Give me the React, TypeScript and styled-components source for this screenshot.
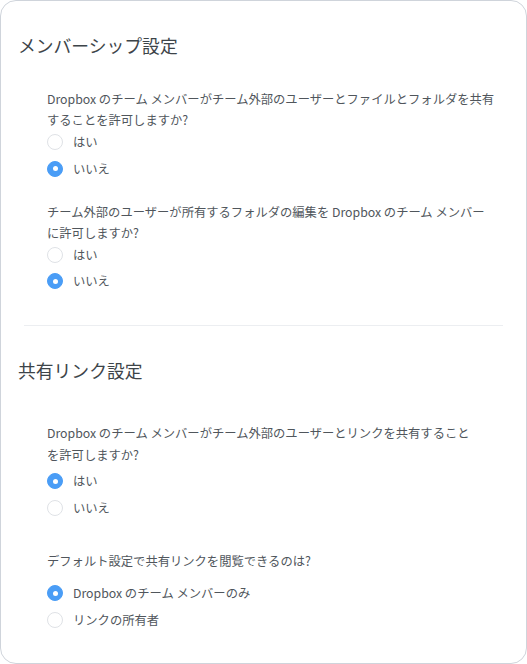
import React from "react";
import styled, { createGlobalStyle } from "styled-components";

const Global = createGlobalStyle`
  html, body { margin: 0; padding: 0; background: #ffffff; }
  body { font-family: "Noto Sans CJK JP", "Noto Sans", sans-serif; }
  * { box-sizing: border-box; }
`;

const Card = styled.div`
  width: 527px;
  height: 664px;
  border: 1px solid #cfd4db;
  border-radius: 16px;
  background: #fff;
  display: flex;
  flex-direction: column;
  overflow: hidden;
`;

const Section = styled.section<{ $pt: number }>`
  padding-top: ${(p) => p.$pt}px;
  display: flex;
  flex-direction: column;
`;

const Title = styled.h2`
  margin: 0;
  padding-left: 17px;
  font-size: 17.8px;
  line-height: 24px;
  font-weight: 400;
  color: #3d4449;
`;

const Divider = styled.hr`
  margin: 0 23px;
  border: none;
  border-top: 1px solid #eceef1;
  height: 0;
`;

const Group = styled.div<{ $mt: number }>`
  margin-top: ${(p) => p.$mt}px;
  padding-left: 46px;
  display: flex;
  flex-direction: column;
`;

const Question = styled.p<{ $mb: number }>`
  margin: 0 0 ${(p) => p.$mb}px;
  font-size: 12.3px;
  line-height: 21.5px;
  color: #50565c;
  white-space: nowrap;
`;

const Options = styled.div<{ $gap: number }>`
  display: flex;
  flex-direction: column;
  gap: ${(p) => p.$gap}px;
`;

const Option = styled.label`
  display: flex;
  align-items: center;
  gap: 10px;
  height: 20px;
  font-size: 12.3px;
  color: #50565c;
  cursor: pointer;
`;

const Radio = styled.span<{ $checked: boolean }>`
  width: 16px;
  height: 16px;
  border-radius: 50%;
  flex: none;
  display: flex;
  align-items: center;
  justify-content: center;
  background: ${(p) => (p.$checked ? "#4a9df6" : "#ffffff")};
  border: 1px solid ${(p) => (p.$checked ? "#4a9df6" : "#dfe2e6")};
  &::after {
    content: "";
    width: 5px;
    height: 5px;
    border-radius: 50%;
    background: #fff;
    display: ${(p) => (p.$checked ? "block" : "none")};
  }
`;

type Q = { lines: string[]; options: string[]; checked: number; mt: number; mb: number; gap: number };

const QuestionGroup = ({ q }: { q: Q }) => (
  <Group $mt={q.mt}>
    <Question $mb={q.mb}>
      {q.lines.map((l, i) => (
        <React.Fragment key={i}>
          {i > 0 && <br />}
          {l}
        </React.Fragment>
      ))}
    </Question>
    <Options $gap={q.gap}>
      {q.options.map((o, i) => (
        <Option key={o}>
          <Radio $checked={i === q.checked} />
          {o}
        </Option>
      ))}
    </Options>
  </Group>
);

const s1: Q[] = [
  {
    lines: [
      "Dropbox のチーム メンバーがチーム外部のユーザーとファイルとフォルダを共有",
      "することを許可しますか?",
    ],
    options: ["はい", "いいえ"],
    checked: 1,
    mt: 31.5,
    mb: 0.5,
    gap: 6.6,
  },
  {
    lines: [
      "チーム外部のユーザーが所有するフォルダの編集を Dropbox のチーム メンバー",
      "に許可しますか?",
    ],
    options: ["はい", "いいえ"],
    checked: 1,
    mt: 23,
    mb: 0,
    gap: 6.6,
  },
];

const s2: Q[] = [
  {
    lines: [
      "Dropbox のチーム メンバーがチーム外部のユーザーとリンクを共有すること",
      "を許可しますか?",
    ],
    options: ["はい", "いいえ"],
    checked: 0,
    mt: 41.5,
    mb: 5,
    gap: 6.6,
  },
  {
    lines: ["デフォルト設定で共有リンクを閲覧できるのは?"],
    options: ["Dropbox のチーム メンバーのみ", "リンクの所有者"],
    checked: 0,
    mt: 33,
    mb: 11,
    gap: 7,
  },
];

export default function App() {
  return (
    <>
      <Global />
      <Card>
        <Section $pt={32}>
          <Title>メンバーシップ設定</Title>
          {s1.map((q, i) => (
            <QuestionGroup key={i} q={q} />
          ))}
        </Section>
        <Section $pt={34}>
          <Divider />
        </Section>
        <Section $pt={31.5}>
          <Title>共有リンク設定</Title>
          {s2.map((q, i) => (
            <QuestionGroup key={i} q={q} />
          ))}
        </Section>
      </Card>
    </>
  );
}
